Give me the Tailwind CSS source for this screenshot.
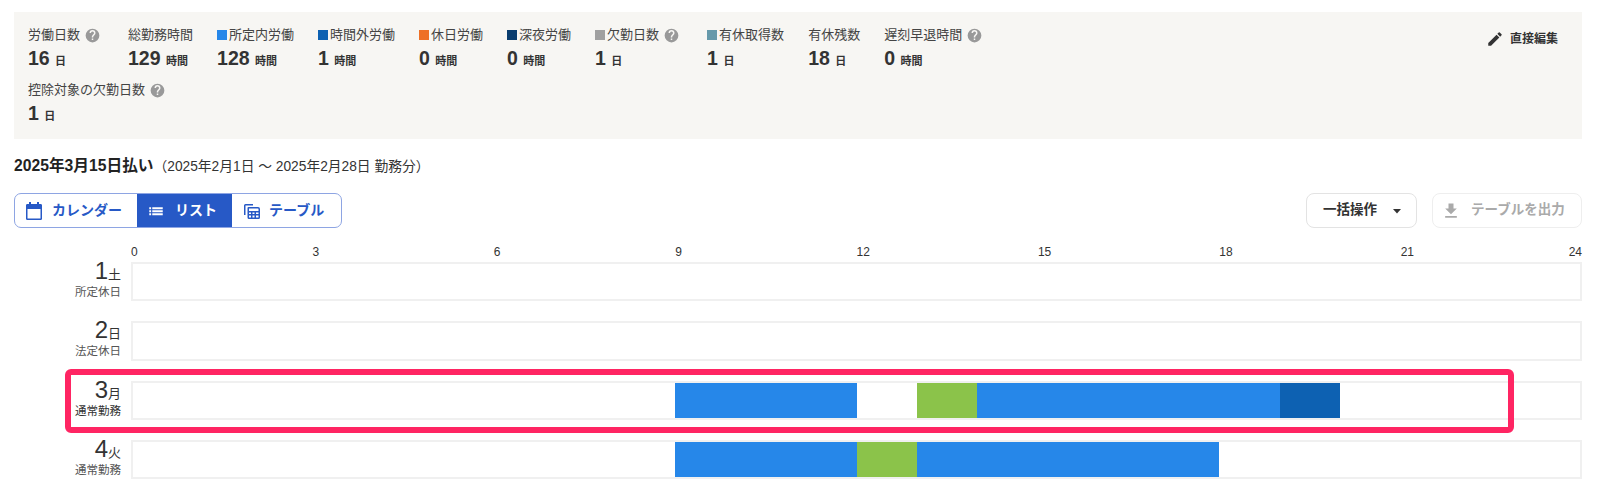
<!DOCTYPE html>
<html lang="ja">

<head>
    <meta charset="UTF-8">
    <meta name="viewport" content="width=device-width, initial-scale=1.0">
    <script src="https://cdn.jsdelivr.net/npm/@tailwindcss/browser@4"></script>
    <title>勤怠</title>
</head>

<body class="bg-white text-[#333] font-['Liberation_Sans','Noto_Sans_CJK_JP',sans-serif] overflow-hidden">
    <div class="pl-[14px] pr-[18px] pt-3">
        <!-- Summary -->
        <div class="bg-[#f7f6f3] h-[127px] pl-[14px] pr-[24px] pt-[15px] flex justify-between">
            <div class="flex flex-wrap content-start gap-x-6 gap-y-[12px] w-[1100px]">
                <div>
                    <div class="flex items-center h-[16px] text-[13px] leading-4 text-[#444]">労働日数
                        <svg class="w-[15px] h-[15px] ml-[5px] mr-[4px] fill-[#999]" viewBox="0 0 24 24"><path d="M12 1a11 11 0 1 0 0 22 11 11 0 0 0 0-22zm1.200 18h-2.400v-2.400h2.400V19zm2.500-8.200-1.100 1.100c-.9.900-1.400 1.600-1.400 3.100h-2.400v-.6c0-1.300.5-2.500 1.400-3.400l1.500-1.500c.4-.4.7-1 .7-1.700a2.400 2.400 0 0 0-4.800 0H7.200a4.800 4.800 0 0 1 9.600 0c0 1-.4 2-1.100 3z"/></svg>
                    </div>
                    <div class="mt-[3px] h-[24px] font-bold text-[19.5px] leading-6">16 <span class="text-[11px]">日</span></div>
                </div>
                <div>
                    <div class="flex items-center h-[16px] text-[13px] leading-4 text-[#444]">総勤務時間</div>
                    <div class="mt-[3px] h-[24px] font-bold text-[19.5px] leading-6">129 <span class="text-[11px]">時間</span></div>
                </div>
                <div>
                    <div class="flex items-center h-[16px] text-[13px] leading-4 text-[#444]"><span class="w-[10px] h-[10px] mr-[2px] bg-[#2687e9]"></span>所定内労働</div>
                    <div class="mt-[3px] h-[24px] font-bold text-[19.5px] leading-6">128 <span class="text-[11px]">時間</span></div>
                </div>
                <div>
                    <div class="flex items-center h-[16px] text-[13px] leading-4 text-[#444]"><span class="w-[10px] h-[10px] mr-[2px] bg-[#0d61b2]"></span>時間外労働</div>
                    <div class="mt-[3px] h-[24px] font-bold text-[19.5px] leading-6">1 <span class="text-[11px]">時間</span></div>
                </div>
                <div>
                    <div class="flex items-center h-[16px] text-[13px] leading-4 text-[#444]"><span class="w-[10px] h-[10px] mr-[2px] bg-[#ee7026]"></span>休日労働</div>
                    <div class="mt-[3px] h-[24px] font-bold text-[19.5px] leading-6">0 <span class="text-[11px]">時間</span></div>
                </div>
                <div>
                    <div class="flex items-center h-[16px] text-[13px] leading-4 text-[#444]"><span class="w-[10px] h-[10px] mr-[2px] bg-[#0a3d6e]"></span>深夜労働</div>
                    <div class="mt-[3px] h-[24px] font-bold text-[19.5px] leading-6">0 <span class="text-[11px]">時間</span></div>
                </div>
                <div>
                    <div class="flex items-center h-[16px] text-[13px] leading-4 text-[#444]"><span class="w-[10px] h-[10px] mr-[2px] bg-[#a0a0a0]"></span>欠勤日数
                        <svg class="w-[15px] h-[15px] ml-[5px] mr-[4px] fill-[#999]" viewBox="0 0 24 24"><path d="M12 1a11 11 0 1 0 0 22 11 11 0 0 0 0-22zm1.200 18h-2.400v-2.400h2.400V19zm2.500-8.200-1.100 1.100c-.9.900-1.400 1.600-1.400 3.100h-2.400v-.6c0-1.300.5-2.500 1.400-3.400l1.500-1.500c.4-.4.7-1 .7-1.700a2.400 2.400 0 0 0-4.800 0H7.200a4.800 4.800 0 0 1 9.600 0c0 1-.4 2-1.100 3z"/></svg>
                    </div>
                    <div class="mt-[3px] h-[24px] font-bold text-[19.5px] leading-6">1 <span class="text-[11px]">日</span></div>
                </div>
                <div>
                    <div class="flex items-center h-[16px] text-[13px] leading-4 text-[#444]"><span class="w-[10px] h-[10px] mr-[2px] bg-[#6699aa]"></span>有休取得数</div>
                    <div class="mt-[3px] h-[24px] font-bold text-[19.5px] leading-6">1 <span class="text-[11px]">日</span></div>
                </div>
                <div>
                    <div class="flex items-center h-[16px] text-[13px] leading-4 text-[#444]">有休残数</div>
                    <div class="mt-[3px] h-[24px] font-bold text-[19.5px] leading-6">18 <span class="text-[11px]">日</span></div>
                </div>
                <div>
                    <div class="flex items-center h-[16px] text-[13px] leading-4 text-[#444]">遅刻早退時間
                        <svg class="w-[15px] h-[15px] ml-[5px] mr-[4px] fill-[#999]" viewBox="0 0 24 24"><path d="M12 1a11 11 0 1 0 0 22 11 11 0 0 0 0-22zm1.200 18h-2.400v-2.400h2.400V19zm2.500-8.200-1.100 1.100c-.9.900-1.400 1.600-1.400 3.100h-2.400v-.6c0-1.300.5-2.500 1.400-3.400l1.500-1.500c.4-.4.7-1 .7-1.700a2.400 2.400 0 0 0-4.800 0H7.200a4.800 4.800 0 0 1 9.600 0c0 1-.4 2-1.100 3z"/></svg>
                    </div>
                    <div class="mt-[3px] h-[24px] font-bold text-[19.5px] leading-6">0 <span class="text-[11px]">時間</span></div>
                </div>
                <div class="basis-full">
                    <div class="flex items-center h-[16px] text-[13px] leading-4 text-[#444]">控除対象の欠勤日数
                        <svg class="w-[15px] h-[15px] ml-[5px] mr-[4px] fill-[#999]" viewBox="0 0 24 24"><path d="M12 1a11 11 0 1 0 0 22 11 11 0 0 0 0-22zm1.200 18h-2.400v-2.400h2.400V19zm2.500-8.200-1.100 1.100c-.9.900-1.400 1.600-1.400 3.100h-2.400v-.6c0-1.300.5-2.500 1.400-3.400l1.500-1.500c.4-.4.7-1 .7-1.700a2.400 2.400 0 0 0-4.800 0H7.200a4.800 4.800 0 0 1 9.600 0c0 1-.4 2-1.100 3z"/></svg>
                    </div>
                    <div class="mt-[3px] h-[24px] font-bold text-[19.5px] leading-6">1 <span class="text-[11px]">日</span></div>
                </div>
            </div>
            <div class="flex items-center self-start h-[20px] mt-[2px] text-[12px] font-bold text-[#333]">
                <svg class="w-[18px] h-[18px] mr-[6px] fill-[#333]" viewBox="0 0 24 24"><path d="M3 17.250V21h3.750L17.810 9.940l-3.750-3.750L3 17.250zM20.710 7.040a1 1 0 0 0 0-1.410l-2.340-2.340a1 1 0 0 0-1.410 0l-1.830 1.830 3.750 3.750 1.830-1.830z"/></svg>
                直接編集
            </div>
        </div>

        <!-- Period -->
        <div class="mt-[17px] h-[20px] leading-5 text-[13.75px] text-[#333]"><span class="text-[15.7px] font-bold text-[#222]">2025年3月15日払い</span>（2025年2月1日 ～ 2025年2月28日 勤務分）</div>

        <!-- Toolbar -->
        <div class="mt-[17px] flex justify-between h-[35px]">
            <div class="flex border border-[#8ea5e3] rounded-[7px] overflow-hidden text-[14px] font-bold text-[#2759c6]">
                <div class="w-[122px] flex items-center pl-[9px]">
                    <svg class="w-[20px] h-[20px] mr-[8px] fill-[#2759c6]" viewBox="0 0 20 20"><path d="M3 3h2V1h2v2h6V1h2v2h2a1.500 1.500 0 0 1 1 1.500v13a1.500 1.500 0 0 1-1 1.500H3a1.500 1.500 0 0 1-1-1.500v-13A1.500 1.500 0 0 1 3 3zm.500 5v9.500h13V8h-13z"/></svg>
                    カレンダー
                </div>
                <div class="w-[95px] flex items-center pl-[10px] bg-[#2759c6] text-white">
                    <svg class="w-[18px] h-[18px] mr-[10px] fill-white" viewBox="0 0 24 24"><path d="M3 7h2.500v2.500H3V7zm0 4h2.500v2.500H3V11zm0 4h2.500v2.500H3V15zM7 7h14v2.500H7V7zm0 4h14v2.500H7V11zm0 4h14v2.500H7V15z"/></svg>
                    リスト
                </div>
                <div class="w-[109px] flex items-center pl-[11px]">
                    <svg class="w-[18px] h-[18px] mr-[8px] fill-[#2759c6]" viewBox="0 0 18 18"><path d="M1 3.500A1.500 1.500 0 0 1 2.500 2H10v1.500H2.500V13H1V3.500z"/><path fill-rule="evenodd" d="M5.500 5H15a2 2 0 0 1 2 2v8.500a1.500 1.500 0 0 1-1.500 1.500H6a1.500 1.500 0 0 1-1.500-1.500V6a1 1 0 0 1 1-1zM6 6.500V9h9.500V7a.5.500 0 0 0-.5-.5H6zm0 4v1.500h2v-1.500H6zm3.500 0v1.500h2v-1.500h-2zm3.500 0v1.500h2.500v-1.500H13zM6 13.500v2h2v-2H6zm3.500 0v2h2v-2h-2zm3.500 0v2h2.500v-2H13z"/></svg>
                    テーブル
                </div>
            </div>
            <div class="flex gap-[15px] text-[13.5px]">
                <div class="w-[111px] flex items-center pl-[16px] border border-[#e3e3e3] rounded-[8px] font-bold text-[#333]">
                    一括操作
                    <svg class="w-[10px] h-[10px] ml-[15px] fill-[#333]" viewBox="0 0 10 10"><path d="M1 3h8L5 7.500z"/></svg>
                </div>
                <div class="w-[150px] flex items-center pl-[8px] border border-[#eeeeee] rounded-[8px] font-bold text-[#aaa]">
                    <svg class="w-[20px] h-[20px] mr-[10px] fill-[#aaa]" viewBox="0 0 24 24"><path d="M19 9h-4V3H9v6H5l7 7 7-7zM5 18v2h14v-2H5z"/></svg>
                    テーブルを出力
                </div>
            </div>
        </div>

        <!-- Time axis -->
        <div class="ml-[117px] mt-[16px] h-[18px] flex text-[12px] leading-[16px] text-[#333]">
            <div class="flex-1">0</div>
            <div class="flex-1">3</div>
            <div class="flex-1">6</div>
            <div class="flex-1">9</div>
            <div class="flex-1">12</div>
            <div class="flex-1">15</div>
            <div class="flex-1">18</div>
            <div class="flex-1 flex justify-between"><span>21</span><span>24</span></div>
        </div>

        <!-- Rows -->
        <div class="flex flex-col gap-[20px]">
            <div class="flex h-[39.33px]">
                <div class="w-[107px] text-right text-[#333]">
                    <div class="h-[22px] mt-[-2px] leading-[22px] text-[24px]">1<span class="text-[13px]">土</span></div>
                    <div class="mt-[2px] text-[11.5px] leading-[16px] text-[#555]">所定休日</div>
                </div>
                <div class="ml-[10px] flex-1 border-2 border-[#f0f0f0]"></div>
            </div>
            <div class="flex h-[39.33px]">
                <div class="w-[107px] text-right text-[#333]">
                    <div class="h-[22px] mt-[-2px] leading-[22px] text-[24px]">2<span class="text-[13px]">日</span></div>
                    <div class="mt-[2px] text-[11.5px] leading-[16px] text-[#555]">法定休日</div>
                </div>
                <div class="ml-[10px] flex-1 border-2 border-[#f0f0f0]"></div>
            </div>
            <div class="relative flex h-[39.33px]">
                <div class="w-[107px] text-right text-[#333]">
                    <div class="h-[22px] mt-[-2px] leading-[22px] text-[24px]">3<span class="text-[13px]">月</span></div>
                    <div class="mt-[2px] text-[11.5px] leading-[16px] text-[#333]">通常勤務</div>
                </div>
                <div class="ml-[10px] flex-1 border-2 border-[#f0f0f0]">
                    <div class="-mx-[2px] h-full grid grid-cols-24">
                        <div class="col-start-10 col-span-3 bg-[#2687e9]"></div>
                        <div class="col-start-14 col-span-1 bg-[#8bc34a]"></div>
                        <div class="col-start-15 col-span-5 bg-[#2687e9]"></div>
                        <div class="col-start-20 col-span-1 bg-[#0d61b2]"></div>
                    </div>
                </div>
                <!-- highlight frame -->
                <div class="absolute left-[51px] top-[-12px] w-[1449px] h-[64px] border-[6px] border-[#ff2563] rounded-[6px]"></div>
            </div>
            <div class="flex h-[39.33px]">
                <div class="w-[107px] text-right text-[#333]">
                    <div class="h-[22px] mt-[-2px] leading-[22px] text-[24px]">4<span class="text-[13px]">火</span></div>
                    <div class="mt-[2px] text-[11.5px] leading-[16px] text-[#555]">通常勤務</div>
                </div>
                <div class="ml-[10px] flex-1 border-2 border-[#f0f0f0]">
                    <div class="-mx-[2px] h-full grid grid-cols-24">
                        <div class="col-start-10 col-span-3 bg-[#2687e9]"></div>
                        <div class="col-start-13 col-span-1 bg-[#8bc34a]"></div>
                        <div class="col-start-14 col-span-5 bg-[#2687e9]"></div>
                    </div>
                </div>
            </div>
        </div>
    </div>
</body>

</html>
